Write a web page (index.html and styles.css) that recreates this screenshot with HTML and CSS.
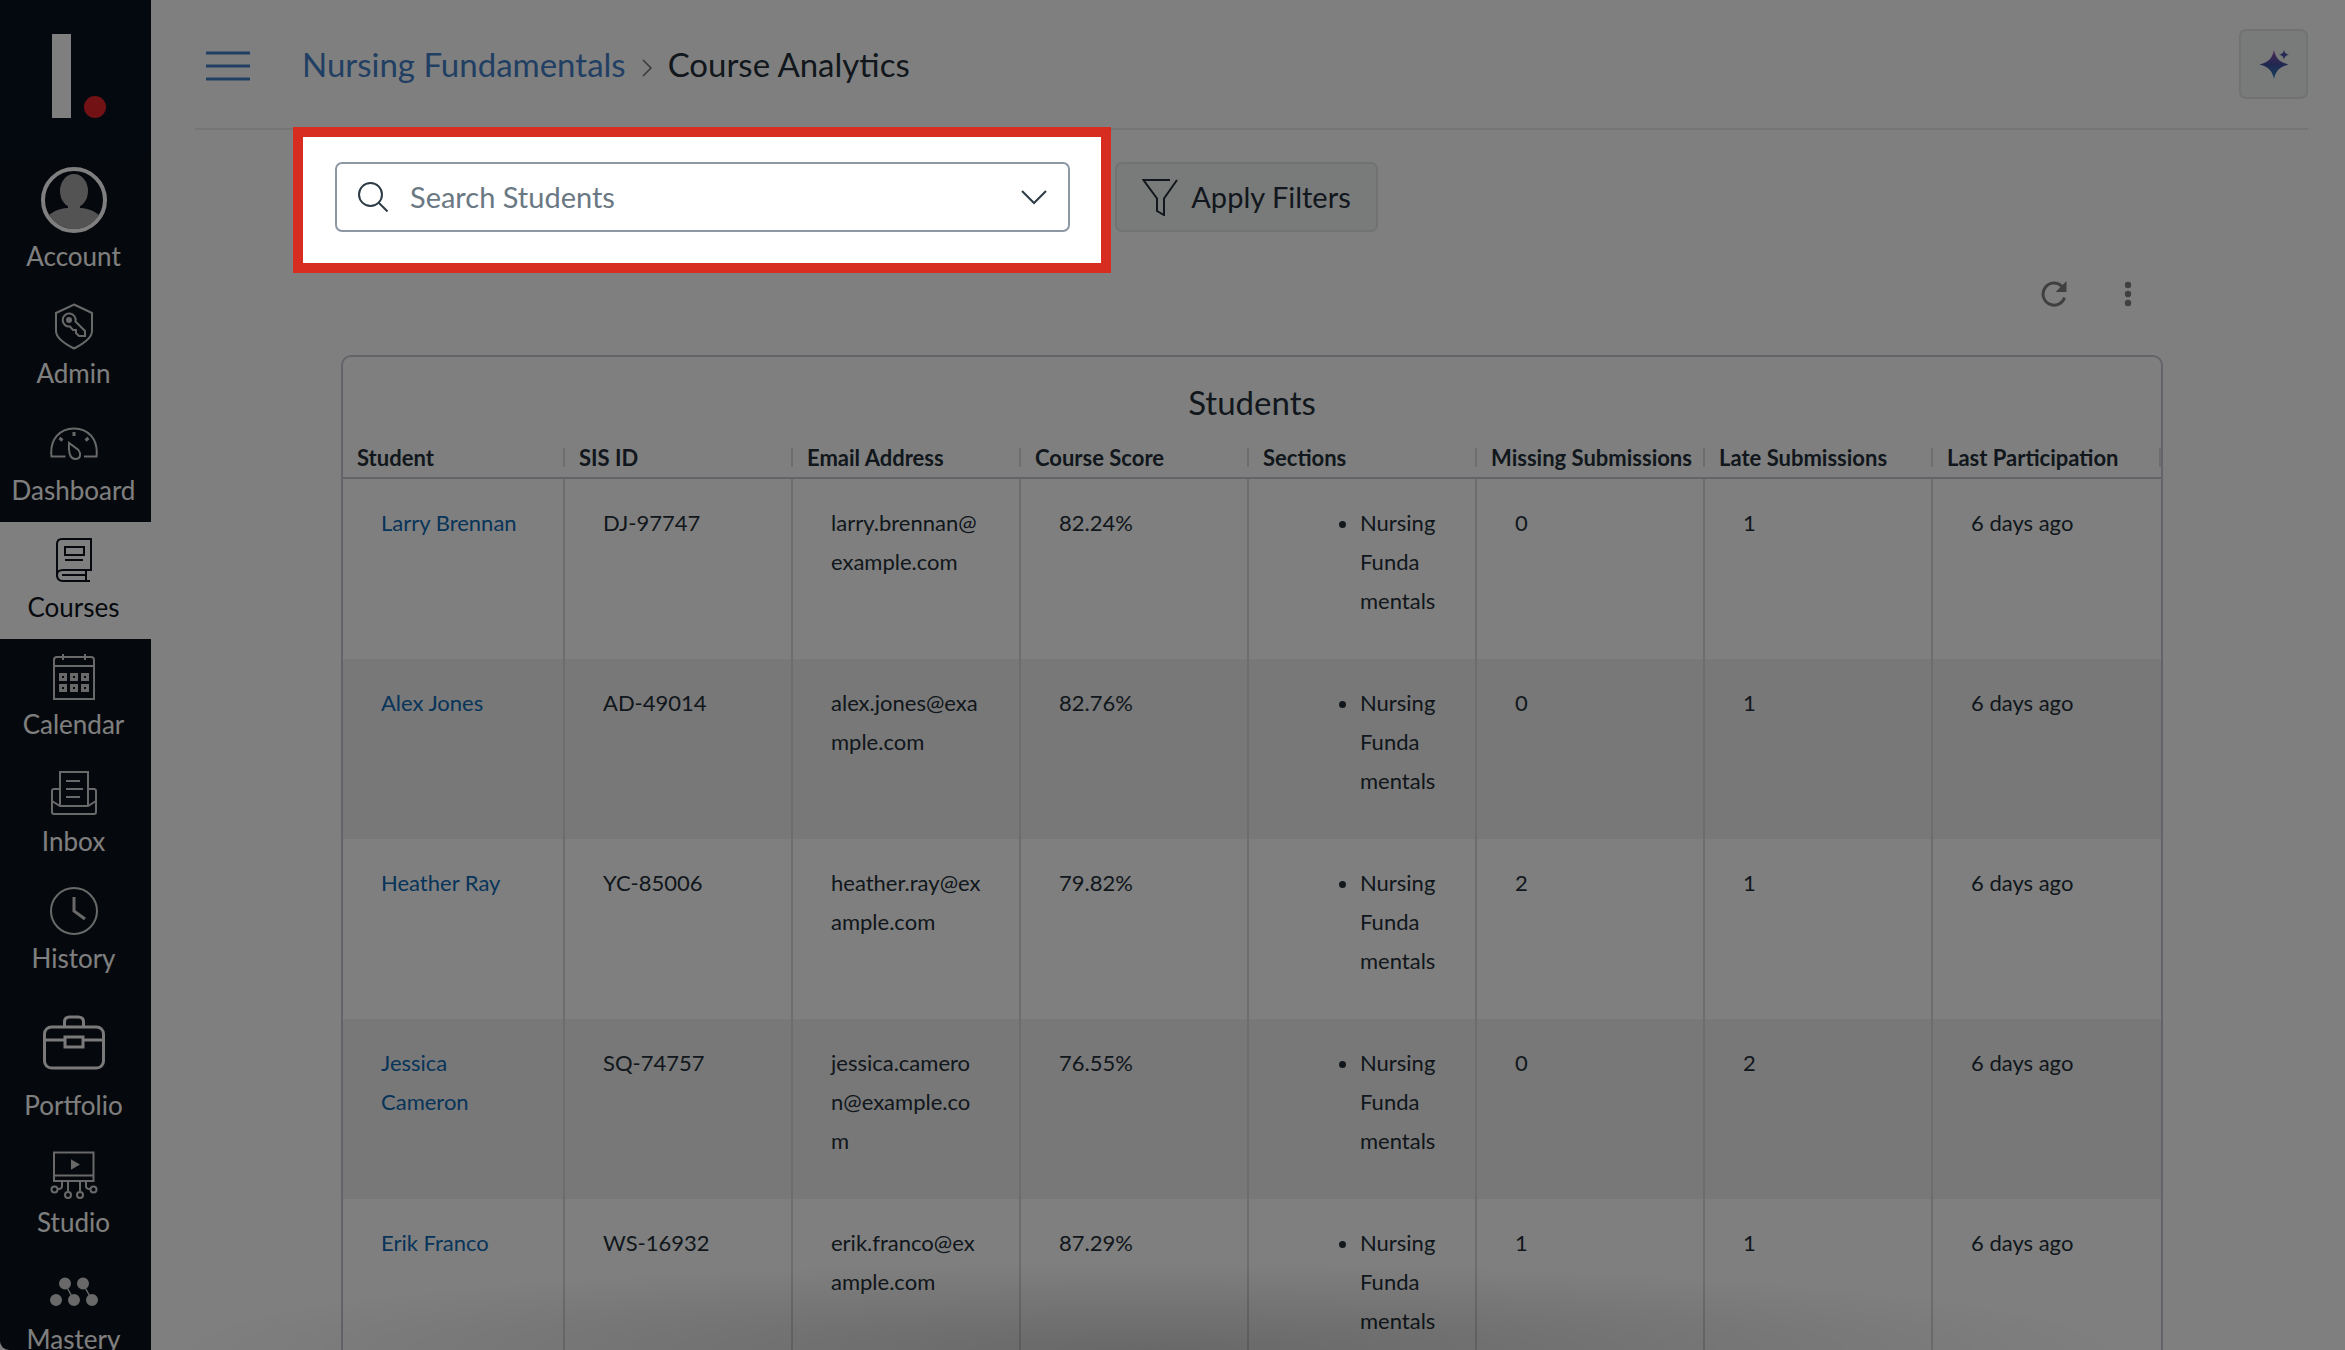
FILE: index.html
```html
<!DOCTYPE html>
<html lang="en">
<head>
<meta charset="utf-8">
<title>Course Analytics</title>
<link rel="stylesheet" href="styles.css">
</head>
<body>
<div class="app">
  <nav class="sidebar" aria-label="Global navigation">
    <a class="logo" href="#" aria-label="Home">
      <svg width="56" height="84" viewBox="0 0 56 84"><rect width="19" height="84" fill="#fff"/><circle cx="43" cy="73" r="11" fill="#e62429"/></svg>
    </a>
    <a class="nav-item account" href="#">
      <svg width="66" height="66" viewBox="0 0 66 66"><defs><clipPath id="face"><circle cx="33" cy="33" r="29"/></clipPath></defs><g clip-path="url(#face)" fill="#a6a6a6"><ellipse cx="33" cy="24" rx="14" ry="17"/><path d="M27 36h12v5c10 0 18 5 23 11v14H4V52c5-6 13-11 23-11z"/></g><circle cx="33" cy="33" r="31" fill="none" stroke="#fff" stroke-width="4"/></svg>
      <span>Account</span>
    </a>
    <a class="nav-item" href="#">
      <svg width="48" height="48" viewBox="0 0 48 48"><path d="M24 2.500 42 11v18c0 7-9 13-18 17.500C15 42 6 36 6 29V11z"/><circle cx="19" cy="18" r="2" class="fill"/><path d="M25.500 19.500 35 29v5h-6l-3-3v-3h-3l-3-3.500a6.500 6.500 0 1 1 5.500-5z"/></svg>
      <span>Admin</span>
    </a>
    <a class="nav-item" href="#">
      <svg width="48" height="48" viewBox="0 0 48 48"><path d="M15.500 37.500H1.500C-.500 20 10 9.500 24 9.500S48.500 20 46.500 37.500H34"/><path d="M24 13v4M9.500 19l3 2.500M38.500 19l-3 2.500" stroke-width="3"/><path d="M19 24c-.5 7 0 16 6.500 16 5 0 6-5 3-9z"/></svg>
      <span>Dashboard</span>
    </a>
    <a class="nav-item active" href="#" aria-current="page">
      <svg width="48" height="48" viewBox="0 0 48 48"><path d="M7 41V8q0-5 5-5h29v31H13q-6 0-6 5 0 6 6 6h27M36 34v11M12 39h24M15 11h19v8H15zM15 24h18"/></svg>
      <span>Courses</span>
    </a>
    <a class="nav-item" href="#">
      <svg width="48" height="48" viewBox="0 0 48 48"><path d="M4 46V7q0-3 3-3h34q3 0 3 3v39zM4 13h40M13 1v6M35 1v6"/><path d="M10.500 21.500h5v5h-5zM21.500 21.500h5v5h-5zM32.500 21.500h5v5h-5zM10.500 32.500h5v5h-5zM21.500 32.500h5v5h-5zM32.500 32.500h5v5h-5z" stroke-width="3"/></svg>
      <span>Calendar</span>
    </a>
    <a class="nav-item" href="#">
      <svg width="48" height="48" viewBox="0 0 48 48"><path d="M10 35V2h28v33M10 19H4q-2 0-2 2v21q0 2 2 2h40q2 0 2-2V21q0-2-2-2h-6M2 31l8 5h28l8-5M16 11h14M16 19h17M16 27h14"/></svg>
      <span>Inbox</span>
    </a>
    <a class="nav-item" href="#">
      <svg width="48" height="48" viewBox="0 0 48 48"><circle cx="24" cy="24" r="23"/><path d="M24 10v14l11 8" stroke-width="3"/></svg>
      <span>History</span>
    </a>
    <a class="nav-item portfolio" href="#">
      <svg width="78" height="78" viewBox="0 0 78 78"><rect x="9.500" y="23" width="59" height="41" rx="7"/><path d="M29.500 23v-5q0-5 5-5h9q5 0 5 5v5M9.500 36h20M48.500 36h20M30 33h18v10H30z"/></svg>
      <span>Portfolio</span>
    </a>
    <a class="nav-item" href="#">
      <svg width="48" height="48" viewBox="0 0 48 48"><path d="M4 1.500h39.500V30H4zM4 24.500h39.500M12 30v5q0 3-4 3M36 30v5q0 3 4 3M18 30v10M30 30v10"/><circle cx="4.500" cy="38.500" r="3"/><circle cx="43.500" cy="38.500" r="3"/><circle cx="18" cy="44" r="3"/><circle cx="30" cy="44" r="3"/><path class="fill" d="m22 10 6 3.500-6 3.500z"/></svg>
      <span>Studio</span>
    </a>
    <a class="nav-item" href="#">
      <svg width="48" height="48" viewBox="0 0 48 48"><path d="m15 16 9 16M33 16l9 16" stroke-width="1.500"/><g class="fill"><circle cx="15" cy="15.500" r="5"/><circle cx="33" cy="15.500" r="5"/><circle cx="6" cy="32" r="5"/><circle cx="24" cy="32" r="5"/><circle cx="42" cy="32" r="5"/></g></svg>
      <span>Mastery</span>
    </a>
  </nav>

  <main class="main">
    <header class="topbar">
      <button class="menu-button" type="button" aria-label="Toggle course navigation">
        <svg width="44" height="30" viewBox="0 0 44 30"><path d="M0 2h44M0 15h44M0 28h44" stroke="currentColor" stroke-width="3"/></svg>
      </button>
      <nav class="breadcrumbs" aria-label="Breadcrumb">
        <a href="#">Nursing Fundamentals</a>
        <svg width="10" height="18" viewBox="0 0 10 18"><path d="m1 1 8 8-8 8" fill="none" stroke="#6c6c6c" stroke-width="1.500"/></svg>
        <span>Course Analytics</span>
      </nav>
      <button class="ai-button" type="button" aria-label="Ask a question">
        <svg width="30" height="32" viewBox="0 0 30 32"><defs><linearGradient id="spark" x1="0" y1="0" x2="0" y2="1"><stop offset="0.100" stop-color="#8a4fb0"/><stop offset="0.500" stop-color="#4350a0"/><stop offset="1" stop-color="#2080c0"/></linearGradient></defs><path fill="url(#spark)" d="M15 2c1.700 7.500 4.500 12 14.500 14.500C19.500 19 16.700 23.500 15 31c-1.700-7.500-4.500-12-14.500-14.500C10.500 14 13.300 9.500 15 2z"/><path fill="#4a52a8" d="M25 2c.7 3 1.800 4 5 4.700-3.200.7-4.300 1.700-5 4.700-.7-3-1.800-4-5-4.700C23.200 6 24.300 5 25 2z"/></svg>
      </button>
    </header>

    <section class="toolbar">
      <div class="search-box">
        <label for="student-search" aria-label="Search Students">
          <svg width="30" height="30" viewBox="0 0 30 30" fill="none" stroke="#2d3b45" stroke-width="2"><circle cx="12.500" cy="12.500" r="11.500"/><path d="m20.500 20.500 9 9"/></svg>
        </label>
        <input id="student-search" type="text" placeholder="Search Students">
        <svg width="26" height="15" viewBox="0 0 26 15" fill="none" stroke="#2d3b45" stroke-width="2"><path d="m1 1 12 12L25 1"/></svg>
      </div>
      <button class="filter-button" type="button">
        <svg width="36" height="38" viewBox="0 0 36 38" fill="none" stroke="currentColor" stroke-width="2"><path d="M28 2H1.500L15 20.500V33l7 4V20.500L35 2"/></svg>
        <span>Apply Filters</span>
      </button>
    </section>

    <section class="report">
      <div class="report-actions">
        <button type="button" aria-label="Reload">
          <svg width="26" height="26" viewBox="0 0 26 26"><path d="M23.500 16.500A11 11 0 1 1 21 5.500" fill="none" stroke="currentColor" stroke-width="3"/><path d="M25.500 0v11h-11z" fill="currentColor"/></svg>
        </button>
        <button type="button" aria-label="More options">
          <svg width="8" height="26" viewBox="0 0 8 26" fill="currentColor"><circle cx="4" cy="4" r="3.200"/><circle cx="4" cy="13" r="3.200"/><circle cx="4" cy="22" r="3.200"/></svg>
        </button>
      </div>
      <div class="card">
        <table class="students">
          <caption>Students</caption>
          <thead>
            <tr><th scope="col" class="first">Student</th><th scope="col">SIS ID</th><th scope="col">Email Address</th><th scope="col">Course Score</th><th scope="col">Sections</th><th scope="col">Missing Submissions</th><th scope="col">Late Submissions</th><th scope="col">Last Participation</th></tr>
          </thead>
          <tbody>
            <tr><td><a href="#">Larry Brennan</a></td><td>DJ-97747</td><td>larry.brennan@<wbr>example.com</td><td>82.24%</td><td><ul><li>Nursing Funda mentals</li></ul></td><td>0</td><td>1</td><td>6 days ago</td></tr>
            <tr><td><a href="#">Alex Jones</a></td><td>AD-49014</td><td>alex.jones@exa<wbr>mple.com</td><td>82.76%</td><td><ul><li>Nursing Funda mentals</li></ul></td><td>0</td><td>1</td><td>6 days ago</td></tr>
            <tr><td><a href="#">Heather Ray</a></td><td>YC-85006</td><td>heather.ray@ex<wbr>ample.com</td><td>79.82%</td><td><ul><li>Nursing Funda mentals</li></ul></td><td>2</td><td>1</td><td>6 days ago</td></tr>
            <tr><td><a href="#">Jessica Cameron</a></td><td>SQ-74757</td><td>jessica.camero<wbr>n@example.co<wbr>m</td><td>76.55%</td><td><ul><li>Nursing Funda mentals</li></ul></td><td>0</td><td>2</td><td>6 days ago</td></tr>
            <tr><td><a href="#">Erik Franco</a></td><td>WS-16932</td><td>erik.franco@ex<wbr>ample.com</td><td>87.29%</td><td><ul><li>Nursing Funda mentals</li></ul></td><td>1</td><td>1</td><td>6 days ago</td></tr>
          </tbody>
        </table>
      </div>
    </section>
  </main>
</div>
</body>
</html>
```
FILE: styles.css
```css
* {
  box-sizing: border-box;
}

body {
  margin: 0;
  background: #fff;
  color: #232f38;
  font-family: Lato, "Liberation Sans", sans-serif;
}

a {
  text-decoration: none;
}

button {
  padding: 0;
  border: 0;
  background: none;
  color: inherit;
  font: inherit;
}

svg {
  display: block;
  flex: none;
}

.app {
  display: flex;
  height: 100vh;
  overflow: hidden;
}

/* Global navigation */
.sidebar {
  flex: none;
  width: 151px;
  overflow: hidden;
  background: #0b1119;
  border-bottom-left-radius: 9px;
}

.logo {
  display: flex;
  height: 155px;
  padding: 34px 0 0 52px;
  background: #091320;
}

.nav-item {
  display: flex;
  flex-direction: column;
  align-items: center;
  gap: 7px;
  padding: 14px 4px 16px 0;
  color: #fff;
  font-size: 26px;
  line-height: 32px;
}

.nav-item svg {
  fill: none;
  stroke: #d2d2d2;
  stroke-width: 2;
}

.nav-item .fill {
  fill: #d2d2d2;
}

.nav-item.account {
  padding-top: 12px;
}

.account svg {
  stroke: none;
}

.nav-item.portfolio svg {
  stroke: #f4f4f4;
  stroke-width: 3;
}

.nav-item.active {
  background: #fff;
  color: #0b1119;
}

.nav-item.active svg {
  stroke: #0b1119;
}

/* Page header */
.main {
  position: relative;
  flex: 1;
  min-width: 0;
}

/* Soft shade that rises from the bottom edge of the page */
.main::after {
  content: "";
  position: absolute;
  inset: auto 200px 0 0;
  height: 90px;
  background: radial-gradient(ellipse at bottom, rgba(0, 0, 0, 0.18), transparent 70%);
  pointer-events: none;
}

.topbar {
  display: flex;
  align-items: center;
  height: 130px;
  margin: 0 37px 0 44px;
  padding: 0 0 1px 11px;
  border-bottom: 2px solid #ebebeb;
}

.menu-button,
.breadcrumbs a {
  color: #437fc6;
}

.menu-button {
  padding-top: 4px;
}

.breadcrumbs {
  display: flex;
  align-items: baseline;
  gap: 16px;
  flex: 1;
  margin-left: 52px;
  font-size: 33px;
  line-height: 40px;
}

.ai-button,
.filter-button {
  display: flex;
  align-items: center;
  justify-content: center;
  height: 70px;
  border: 2px solid #e2e4e4;
  border-radius: 7px;
  background: #f2f4f4;
}

.ai-button {
  width: 69px;
}

/* Search and filters */
.toolbar {
  display: flex;
  gap: 45px;
  padding: 32px 184px 0;
  font-size: 29px;
}

.search-box {
  position: relative;
  z-index: 2;
  display: flex;
  align-items: center;
  gap: 22px;
  flex: 0 1 735px;
  height: 70px;
  padding: 0 21px;
  border: 2px solid #8d98a4;
  border-radius: 7px;
}

/* Guided-tour highlight: frames the search box and dims the rest */
.search-box::after {
  content: "";
  position: absolute;
  inset: -37px -43px -43px -44px;
  border: 10px solid #d62d20;
  box-shadow: 0 0 0 4000px rgba(0, 0, 0, 0.5);
  pointer-events: none;
}

.search-box input {
  flex: 1;
  min-width: 0;
  padding: 0 0 2px;
  border: 0;
  outline: 0;
  background: none;
  color: #2d3b45;
  font: inherit;
}

.search-box input::placeholder {
  color: #6a7883;
  opacity: 1;
}

.filter-button {
  gap: 13px;
  width: 263px;
}

.filter-button span {
  padding-bottom: 2px;
}

/* Report */
.report {
  padding: 38px 182px 0 190px;
}

.report-actions {
  display: flex;
  justify-content: flex-end;
  gap: 26px;
  margin-bottom: 37px;
  padding-right: 11px;
  color: #808080;
}

.report-actions button {
  display: grid;
  place-items: center;
  width: 48px;
  height: 48px;
}

.card {
  border: 2px solid #c4c8cf;
  border-radius: 10px;
}

.students {
  width: 100%;
  border-spacing: 0;
  table-layout: fixed;
  font-size: 22px;
  line-height: 39px;
}

.students caption {
  padding: 23px 0 14px;
  font-size: 33px;
  line-height: 44px;
}

.students th {
  height: 40px;
  padding: 0 0 0 14px;
  border-bottom: 2px solid #c4c8cf;
  background: linear-gradient(#dcdcdc, #dcdcdc) right center / 2px 19px no-repeat;
  text-align: left;
  white-space: nowrap;
}

.students .first {
  width: 222px;
}

.students td {
  height: 180px;
  padding: 24px 34px 0 38px;
  border-right: 2px solid #dadada;
  vertical-align: top;
}

.students td:last-child {
  border-right: 0;
}

.students tbody tr:nth-child(even) {
  background: #f0f0f0;
}

.students a {
  color: #0e68b3;
}

.students ul {
  margin: 0;
  padding-left: 73px;
}
```
